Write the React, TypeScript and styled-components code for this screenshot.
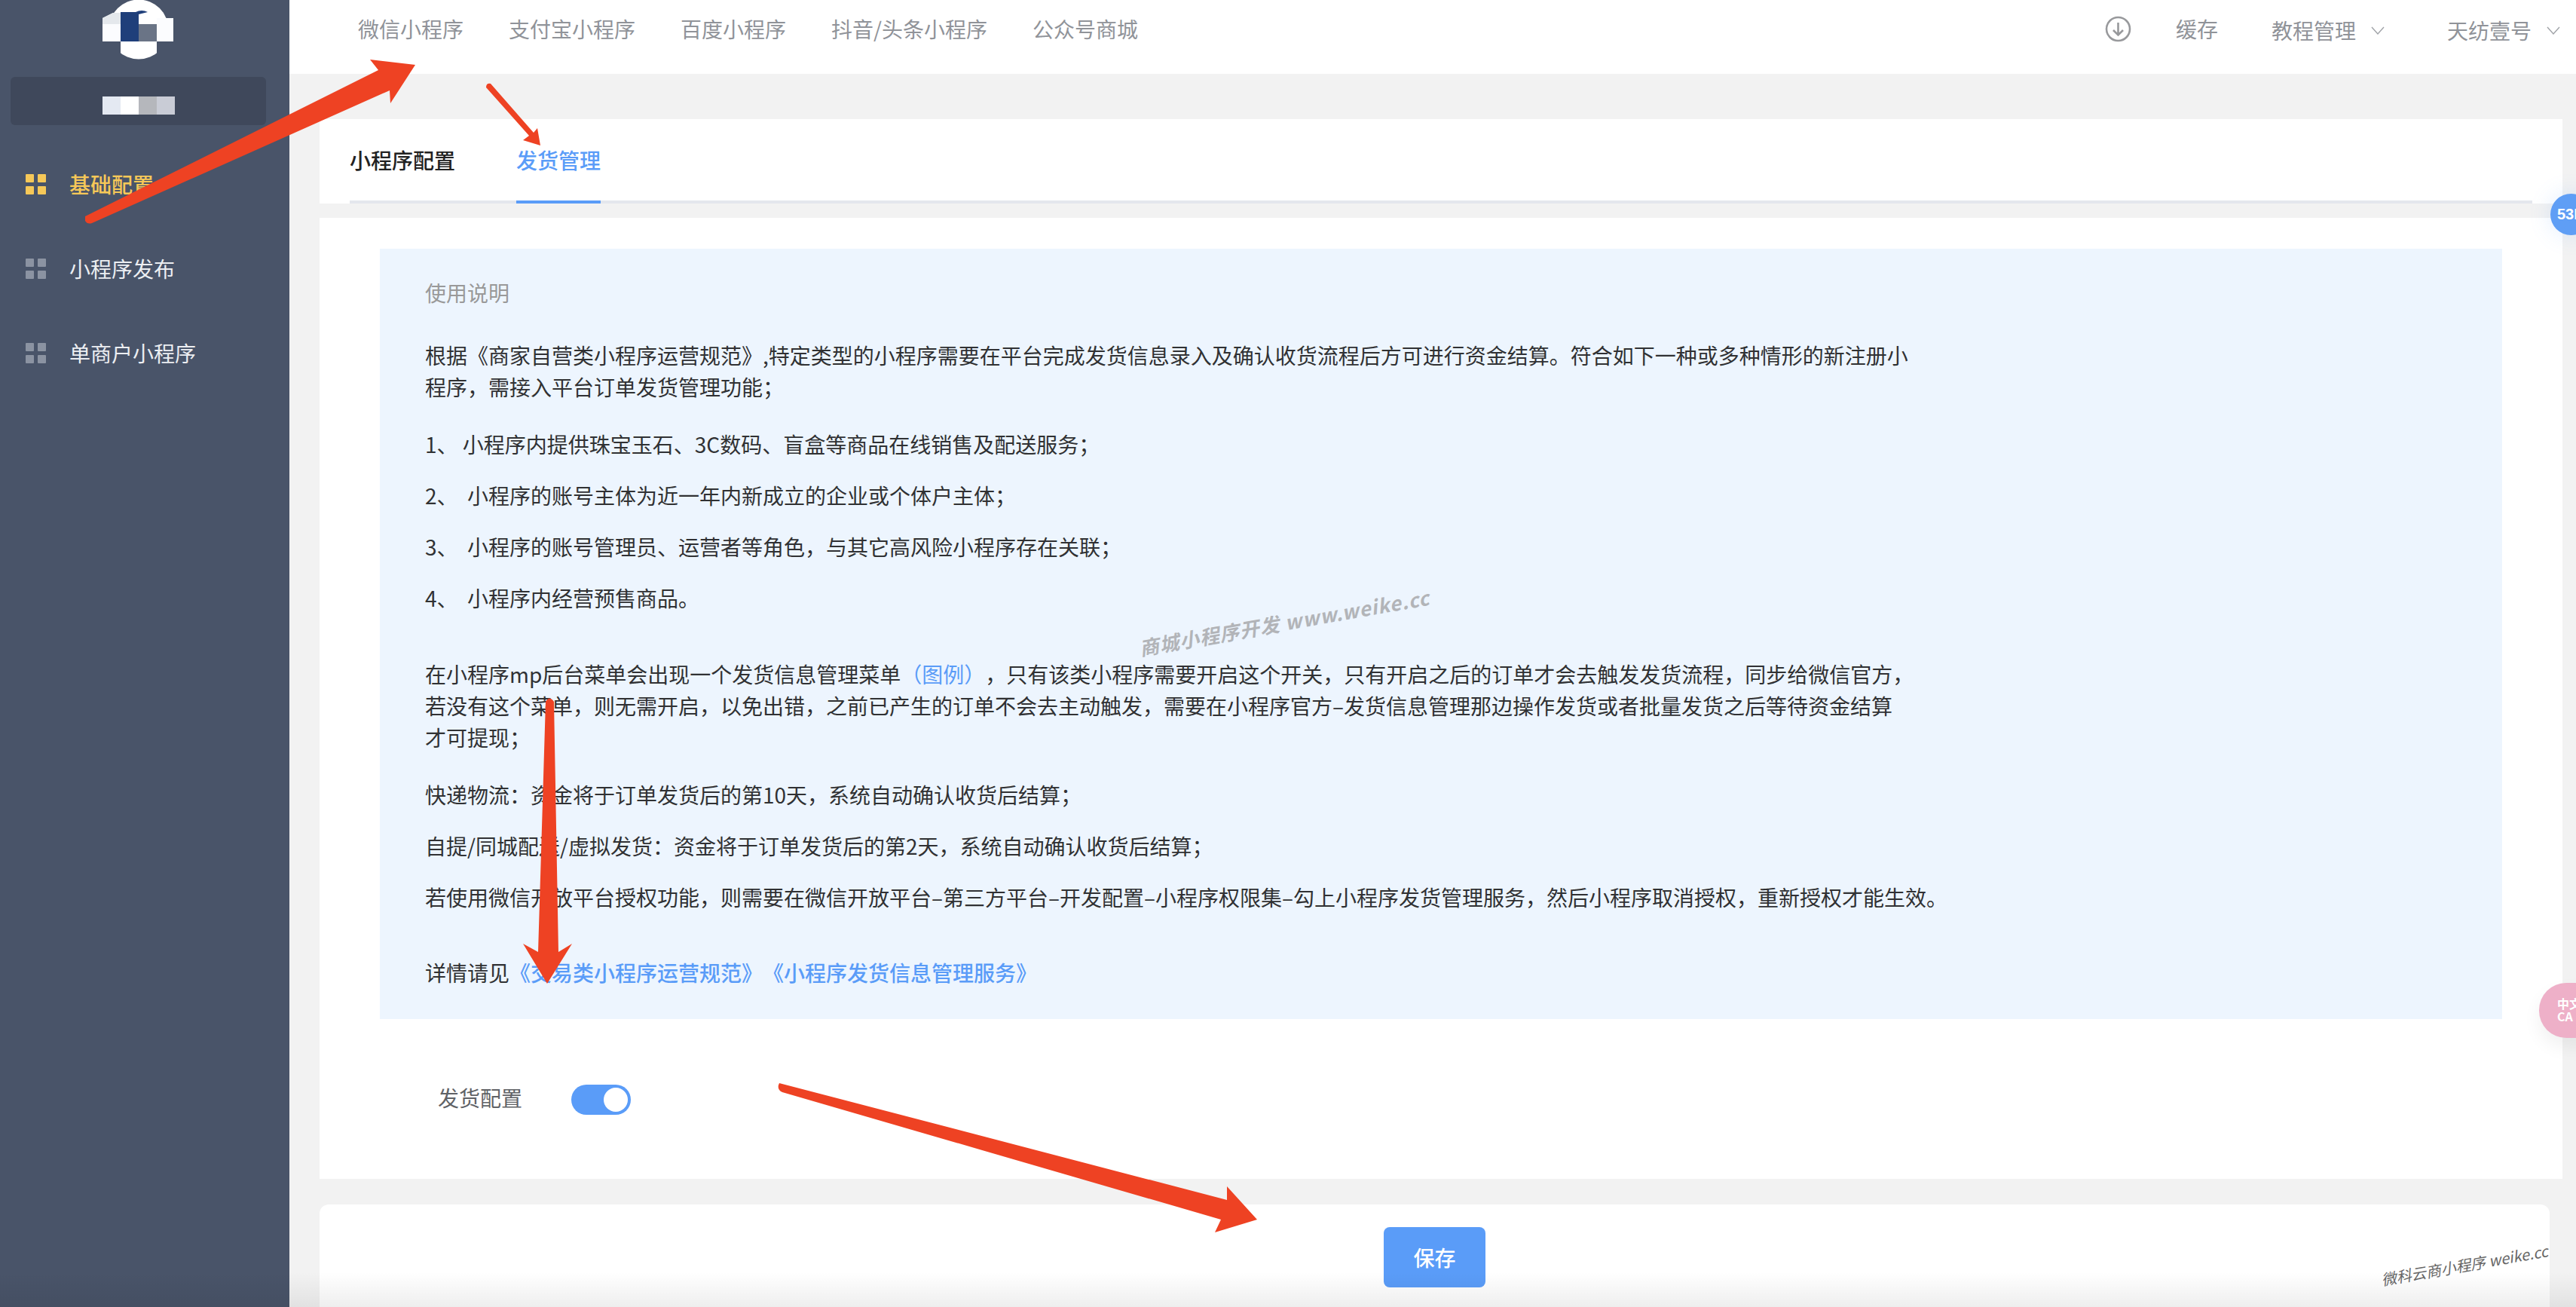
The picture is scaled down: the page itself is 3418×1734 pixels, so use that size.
import React from "react";
import styled, { createGlobalStyle } from "styled-components";

const GlobalStyle = createGlobalStyle`
  html, body {
    margin: 0;
    padding: 0;
    background: #f2f2f2;
    font-family: "Noto Sans CJK SC", "Noto Sans", sans-serif;
  }
  * {
    box-sizing: border-box;
  }
`;

const Page = styled.div`
  position: relative;
  display: flex;
  width: 3418px;
  height: 1734px;
  overflow: hidden;
  background: #f2f2f2;
  font-size: 28px;
  text-spacing-trim: space-all;
`;

const Sidebar = styled.aside`
  display: flex;
  flex-direction: column;
  align-items: stretch;
  flex: 0 0 384px;
  background: #495469;
`;

const LogoWrap = styled.div`
  height: 102px;
  padding-left: 136px;
`;

const ShopBox = styled.div`
  display: flex;
  justify-content: center;
  align-items: flex-start;
  height: 64px;
  margin: 0 31px 0 14px;
  padding-top: 26px;
  border-radius: 6px;
  background: #3f485b;
`;

const Mosaic = styled.div<{ $color: string }>`
  width: 24px;
  height: 24px;
  background: ${p => p.$color};
`;

const Menu = styled.nav`
  display: flex;
  flex-direction: column;
  margin-top: 22px;
`;

const MenuItem = styled.div<{ $active?: boolean }>`
  display: flex;
  align-items: center;
  gap: 31px;
  height: 112px;
  padding-left: 34px;
  color: ${p => (p.$active ? "#f6c858" : "#eceef2")};
  font-weight: ${p => (p.$active ? 500 : 400)};
`;

const Main = styled.main`
  display: flex;
  flex-direction: column;
  flex: 1;
  min-width: 0;
`;

const TopBar = styled.header`
  display: flex;
  align-items: center;
  justify-content: space-between;
  flex: 0 0 98px;
  padding: 0 21px 22px 91px;
  background: #fff;
  color: #909399;
`;

const TopNav = styled.div`
  display: flex;
  gap: 60px;
`;

const TopTools = styled.div`
  display: flex;
  align-items: center;
`;

const CacheLabel = styled.span`
  margin: 0 71px 0 59px;
`;

const Dropdown = styled.span<{ $last?: boolean }>`
  display: flex;
  align-items: center;
  gap: 20px;
  margin-top: 4px;
  margin-right: ${p => (p.$last ? "0" : "83px")};
`;

const Content = styled.div`
  display: flex;
  flex-direction: column;
  flex: 1;
  padding: 60px 18px 0 40px;
`;

const TabCard = styled.section`
  flex: 0 0 112px;
  padding: 0 40px;
  background: #fff;
`;

const TabBar = styled.div`
  display: flex;
  gap: 81px;
  height: 112px;
  border-bottom: 4px solid #e4e7ed;
`;

const Tab = styled.div<{ $active?: boolean }>`
  display: flex;
  align-items: center;
  height: 112px;
  border-bottom: 4px solid ${p => (p.$active ? "#5a9cf8" : "transparent")};
  color: ${p => (p.$active ? "#5a9cf8" : "#222")};
  font-weight: 500;
`;

const SettingsCard = styled.section`
  flex: 0 0 1275px;
  margin-top: 19px;
  padding: 41px 80px 0;
  background: #fff;
`;

const Notice = styled.div`
  padding: 37px 60px 41px;
  background: #edf5fe;
  color: #303133;
  line-height: 42px;
  white-space: nowrap;
`;

const NoticeTitle = styled.div`
  color: #999;
`;

const Para = styled.p<{ $gap: number }>`
  margin: ${p => p.$gap}px 0 0;
`;

const TextLink = styled.span<{ $strong?: boolean }>`
  color: #5a9cf8;
  font-weight: ${p => (p.$strong ? 500 : 400)};
`;

const FormRow = styled.div`
  display: flex;
  align-items: center;
  gap: 65px;
  margin-top: 81px;
  padding-left: 77px;
  color: #606266;
`;

const Switch = styled.span`
  display: flex;
  justify-content: flex-end;
  align-items: center;
  width: 79px;
  height: 40px;
  margin-top: 6px;
  padding-right: 4px;
  border-radius: 20px;
  background: #5a9cf8;
`;

const SwitchKnob = styled.span`
  width: 32px;
  height: 32px;
  border-radius: 50%;
  background: #fff;
`;

const Footer = styled.footer`
  display: flex;
  justify-content: center;
  flex: 1;
  margin: 34px 17px 0 0;
  padding-top: 30px;
  border-radius: 12px 12px 0 0;
  background: #fff;
`;

const SaveButton = styled.button`
  width: 135px;
  height: 80px;
  border: 0;
  border-radius: 8px;
  background: #5a9cf8;
  color: #fff;
  font-family: inherit;
  font-size: 28px;
  font-weight: 500;
`;

const Bubble = styled.div<{ $tone: "blue" | "pink" }>`
  position: absolute;
  display: flex;
  overflow: hidden;
  color: #fff;
  font-weight: 700;
  ${p =>
    p.$tone === "blue"
      ? `
    left: 3384px;
    top: 257px;
    width: 55px;
    height: 55px;
    padding-left: 9px;
    align-items: center;
    border-radius: 50%;
    background: #5f9ef5;
    box-shadow: 0 0 30px rgba(90, 156, 248, 0.18);
    font-family: "Liberation Sans", sans-serif;
    font-size: 20px;
  `
      : `
    left: 3369px;
    top: 1304px;
    width: 100px;
    height: 73px;
    padding: 19px 0 0 24px;
    flex-direction: column;
    border-radius: 36px;
    background: #eeb0c8;
    box-shadow: 0 12px 24px rgba(0, 0, 0, 0.06);
    font-size: 16px;
    line-height: 17px;
  `}
`;

const Watermark = styled.div<{ $spot: "center" | "corner" }>`
  position: absolute;
  transform: translate(-50%, -50%) rotate(-10deg);
  font-style: italic;
  white-space: nowrap;
  ${p =>
    p.$spot === "center"
      ? `
    left: 1704px;
    top: 825px;
    color: #b2b4b8;
    font-size: 26px;
    font-weight: 700;
    letter-spacing: 1px;
  `
      : `
    left: 3270px;
    top: 1678px;
    color: #666;
    font-size: 20px;
    font-weight: 400;
  `}
`;

const BottomShade = styled.div`
  position: absolute;
  left: 0;
  right: 0;
  bottom: 0;
  height: 46px;
  background: linear-gradient(rgba(0, 0, 0, 0), rgba(0, 0, 0, 0.065));
  pointer-events: none;
`;

const ArrowLayer = styled.svg`
  position: absolute;
  left: 0;
  top: 0;
  pointer-events: none;
`;

const GridIcon = ({ color }: { color: string }) => (
  <svg width="27" height="27" viewBox="0 0 27 27">
    <rect x="0" y="0" width="11" height="11" rx="1" fill={color} />
    <rect x="16" y="0" width="11" height="11" rx="1" fill={color} />
    <rect x="0" y="16" width="11" height="11" rx="1" fill={color} />
    <rect x="16" y="16" width="11" height="11" rx="1" fill={color} />
  </svg>
);

const Chevron = () => (
  <svg width="18" height="11" viewBox="0 0 18 11" fill="none">
    <path d="M1 1l8 9 8-9" stroke="#a0a3a8" strokeWidth="1.4" />
  </svg>
);

const DownloadIcon = () => (
  <svg width="35" height="35" viewBox="0 0 35 35" fill="none" stroke="#98999c" strokeWidth="2.6">
    <circle cx="17.5" cy="17.5" r="15.5" />
    <path d="M17.5 9v16M11 19l6.5 6.5L24 19" />
  </svg>
);

// pixelated logo, the mosaic is part of the screenshot
const Logo = () => (
  <svg width="96" height="84" viewBox="0 0 96 84">
    <circle cx="48" cy="39" r="39.5" fill="#fff" />
    <rect x="0" y="55" width="24" height="29" fill="#495469" />
    <rect x="72" y="55" width="24" height="29" fill="#495469" />
    <path d="M0 24L14 17H24V55H0Z" fill="#fbfcfe" />
    <path d="M0 24L14 17H24V32H0Z" fill="#e4e8ec" />
    <path d="M72 24H94V55H72Z" fill="#fbfcfe" />
    <path d="M24 16H44Q52 12 60 16L48 19V55H24Z" fill="#1f3f7a" />
    <rect x="48" y="32" width="24" height="23" fill="#6a7486" />
  </svg>
);

const App: React.FC = () => {
  return (
    <Page>
      <GlobalStyle />
      <Sidebar>
        <LogoWrap>
          <Logo />
        </LogoWrap>
        <ShopBox>
          <Mosaic $color="#e4e9f2" />
          <Mosaic $color="#ffffff" />
          <Mosaic $color="#b5b7bc" />
          <Mosaic $color="#c9ccd6" />
        </ShopBox>
        <Menu>
          <MenuItem $active>
            <GridIcon color="#f6c858" />
            基础配置
          </MenuItem>
          <MenuItem>
            <GridIcon color="#8b93a2" />
            小程序发布
          </MenuItem>
          <MenuItem>
            <GridIcon color="#8b93a2" />
            单商户小程序
          </MenuItem>
        </Menu>
      </Sidebar>

      <Main>
        <TopBar>
          <TopNav>
            <span>微信小程序</span>
            <span>支付宝小程序</span>
            <span>百度小程序</span>
            <span>抖音/头条小程序</span>
            <span>公众号商城</span>
          </TopNav>
          <TopTools>
            <DownloadIcon />
            <CacheLabel>缓存</CacheLabel>
            <Dropdown>
              教程管理
              <Chevron />
            </Dropdown>
            <Dropdown $last>
              天纺壹号
              <Chevron />
            </Dropdown>
          </TopTools>
        </TopBar>

        <Content>
          <TabCard>
            <TabBar>
              <Tab>小程序配置</Tab>
              <Tab $active>发货管理</Tab>
            </TabBar>
          </TabCard>

          <SettingsCard>
            <Notice>
              <NoticeTitle>使用说明</NoticeTitle>
              <Para $gap={41}>
                根据《商家自营类小程序运营规范》,特定类型的小程序需要在平台完成发货信息录入及确认收货流程后方可进行资金结算。符合如下一种或多种情形的新注册小
                <br />
                程序，需接入平台订单发货管理功能；
              </Para>
              <Para $gap={34}>1、 小程序内提供珠宝玉石、3C数码、盲盒等商品在线销售及配送服务；</Para>
              <Para $gap={26}>2、{"\u00a0\u00a0"}小程序的账号主体为近一年内新成立的企业或个体户主体；</Para>
              <Para $gap={26}>3、{"\u00a0\u00a0"}小程序的账号管理员、运营者等角色，与其它高风险小程序存在关联；</Para>
              <Para $gap={26}>4、{"\u00a0\u00a0"}小程序内经营预售商品。</Para>
              <Para $gap={59}>
                在小程序mp后台菜单会出现一个发货信息管理菜单<TextLink>（图例）</TextLink>，只有该类小程序需要开启这个开关，只有开启之后的订单才会去触发发货流程，同步给微信官方，
                <br />
                若没有这个菜单，则无需开启，以免出错，之前已产生的订单不会去主动触发，需要在小程序官方–发货信息管理那边操作发货或者批量发货之后等待资金结算
                <br />
                才可提现；
              </Para>
              <Para $gap={34}>快递物流：资金将于订单发货后的第10天，系统自动确认收货后结算；</Para>
              <Para $gap={26}>自提/同城配送/虚拟发货：资金将于订单发货后的第2天，系统自动确认收货后结算；</Para>
              <Para $gap={26}>若使用微信开放平台授权功能，则需要在微信开放平台–第三方平台–开发配置–小程序权限集–勾上小程序发货管理服务，然后小程序取消授权，重新授权才能生效。</Para>
              <Para $gap={58}>
                详情请见<TextLink $strong>《交易类小程序运营规范》《小程序发货信息管理服务》</TextLink>
              </Para>
            </Notice>
            <FormRow>
              发货配置
              <Switch>
                <SwitchKnob />
              </Switch>
            </FormRow>
          </SettingsCard>

          <Footer>
            <SaveButton>保存</SaveButton>
          </Footer>
        </Content>
      </Main>

      <Bubble $tone="blue">53K</Bubble>
      <Bubble $tone="pink">
        <span>中文</span>
        <span>CA</span>
      </Bubble>
      <Watermark $spot="center">商城小程序开发 www.weike.cc</Watermark>
      <Watermark $spot="corner">微科云商小程序 weike.cc</Watermark>
      <BottomShade />

      <ArrowLayer width="3418" height="1734" viewBox="0 0 3418 1734" fill="#ee4223">
        <path d="M113 287L502 93 491 79 551 86 518 137 517 120 122 296Q116 298 113 293Z" />
        <path d="M645 116Q645 110 651 111L708 176 713 170 717 193 694 186 702 180Z" />
        <path d="M724 931Q729 922 735 931L741 1263 759 1252 726 1305 694 1252 714 1263Z" />
        <path d="M1034 1437L1628 1592 1628 1574 1668 1618 1612 1635 1620 1618 1038 1449Q1030 1445 1034 1437Z" />
      </ArrowLayer>
    </Page>
  );
};

export default App;
